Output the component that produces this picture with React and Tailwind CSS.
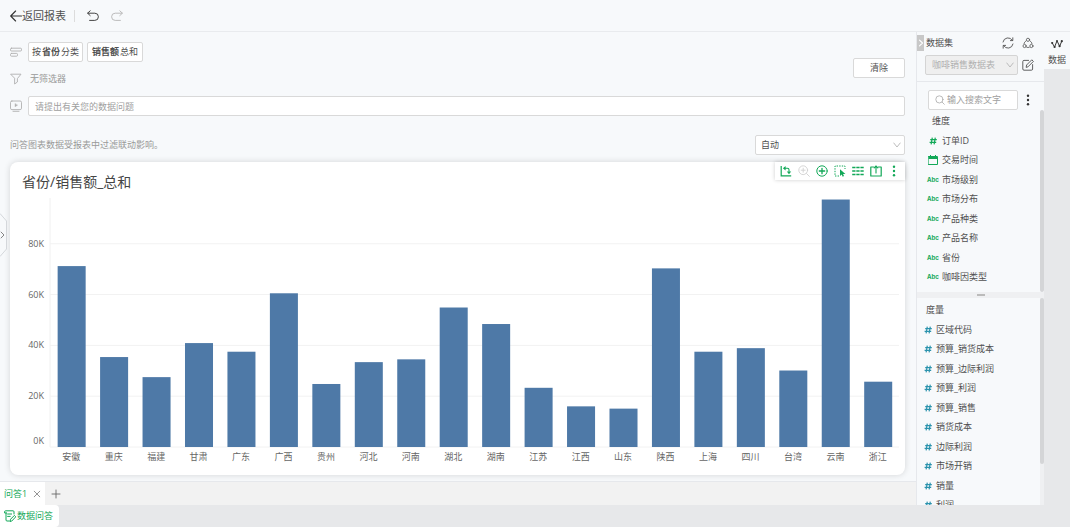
import React, { useState } from "react";

const CHART_MAX = 98000;

const provinces = [
  { name: "安徽", value: 71200 },
  { name: "重庆", value: 35400 },
  { name: "福建", value: 27500 },
  { name: "甘肃", value: 40900 },
  { name: "广东", value: 37500 },
  { name: "广西", value: 60500 },
  { name: "贵州", value: 24800 },
  { name: "河北", value: 33400 },
  { name: "河南", value: 34500 },
  { name: "湖北", value: 54900 },
  { name: "湖南", value: 48400 },
  { name: "江苏", value: 23300 },
  { name: "江西", value: 16000 },
  { name: "山东", value: 15100 },
  { name: "陕西", value: 70300 },
  { name: "上海", value: 37500 },
  { name: "四川", value: 38900 },
  { name: "台湾", value: 30100 },
  { name: "云南", value: 97400 },
  { name: "浙江", value: 25700 },
];

const ticks = [20, 40, 60, 80];

const dimensions = [
  { name: "订单ID", type: "number" },
  { name: "交易时间", type: "date" },
  { name: "市场级别", type: "text" },
  { name: "市场分布", type: "text" },
  { name: "产品种类", type: "text" },
  { name: "产品名称", type: "text" },
  { name: "省份", type: "text" },
  { name: "咖啡因类型", type: "text" },
];

const measures = [
  "区域代码",
  "预算_销货成本",
  "预算_边际利润",
  "预算_利润",
  "预算_销售",
  "销货成本",
  "边际利润",
  "市场开销",
  "销量",
  "利润",
];

const Icon = ({ className = "", box = 12, children }) => (
  <svg
    viewBox={`0 0 ${box} ${box}`}
    className={`shrink-0 ${className}`}
    fill="none"
    stroke="currentColor"
    strokeLinecap="round"
    strokeLinejoin="round"
    aria-hidden="true"
  >
    {children}
  </svg>
);

const HashIcon = ({ className }) => (
  <Icon className={`h-2.5 w-2.5 ${className}`} box={10}>
    <path d="M4.3 1.6 3.1 8.4M7.3 1.6 6.1 8.4M2.2 3.6h6.6M1.6 6.3h6.6" strokeWidth="1.2" strokeLinecap="butt" />
  </Icon>
);

const CalendarIcon = () => (
  <Icon className="h-2.5 w-2.5 text-[#12a858]" box={10}>
    <path d="M.5 1.5h9v8h-9z" strokeWidth="1" strokeLinejoin="miter" />
    <path d="M.5 3h9" strokeWidth="2" strokeLinecap="butt" />
    <path d="M2.5 0v2M7.5 0v2" strokeWidth="1" strokeLinecap="butt" />
  </Icon>
);

const MoreIcon = ({ className }) => (
  <Icon className={className}>
    <g fill="currentColor" stroke="none">
      <circle cx="6" cy="1.7" r="1.2" />
      <circle cx="6" cy="6" r="1.2" />
      <circle cx="6" cy="10.3" r="1.2" />
    </g>
  </Icon>
);

const ChevronDown = () => (
  <Icon
    className="pointer-events-none col-start-1 row-start-1 mr-1 h-2 w-2 justify-self-end text-[#b5b5b5]"
    box={8}
  >
    <path d="M.8 2 4 6l3.2-4" strokeWidth=".9" />
  </Icon>
);

const Header = () => (
  <header className="flex h-8 shrink-0 items-center border-b border-[#e9ebee] px-2.5">
    <button className="flex items-center text-[11px]">
      <Icon className="h-3 w-3 text-[#333]">
        <path d="M11.5 6H.8M5.6 1 .7 6l4.9 5" strokeWidth="1.1" />
      </Icon>
      返回报表
    </button>
    <span className="ml-2 h-3 w-px bg-[#dcdcdc]" />
    <button aria-label="撤销" className="ml-3 text-[#444]">
      <Icon className="h-3 w-3">
        <path d="M3.2.8.6 3.2l2.6 2.4M.8 3.2h7a3.6 3.6 0 0 1 0 7.2H2.6" strokeWidth="1" />
      </Icon>
    </button>
    <button aria-label="重做" className="ml-3 text-[#bbb]">
      <Icon className="h-3 w-3">
        <path d="M8.8.8l2.6 2.4-2.6 2.4M11.2 3.2h-7a3.6 3.6 0 0 0 0 7.2h5.2" strokeWidth="1" />
      </Icon>
    </button>
  </header>
);

const QueryBar = () => (
  <section className="flex flex-col gap-2">
    <div className="flex items-start">
      <div className="flex flex-1 flex-col gap-2">
        <div className="flex items-center gap-1.5">
          <Icon className="h-3 w-3 text-[#b0b0b0]">
            <rect x=".5" y="2.2" width="11" height="2.8" rx="1" strokeWidth=".9" />
            <rect x=".5" y="7.4" width="7" height="2.8" rx="1" strokeWidth=".9" />
          </Icon>
          <div className="flex gap-1">
            <button className="h-5 rounded-xs border border-[#d9d9d9] bg-white px-[3px]">
              按<b className="px-px">省份</b>分类
            </button>
            <button className="h-5 rounded-xs border border-[#d9d9d9] bg-white px-1">
              <b className="pr-px">销售额</b>总和
            </button>
          </div>
        </div>
        <div className="flex h-[18px] items-center gap-2 text-[#999]">
          <Icon className="h-3 w-3 text-[#b0b0b0]">
            <path d="M1 1.2h10L7.4 5.6v3.4l-2.8 2V5.6z" strokeWidth=".9" />
          </Icon>
          无筛选器
        </div>
      </div>
      <button className="mt-4 h-5 rounded-xs border border-[#d9d9d9] bg-white px-4">清除</button>
    </div>
    <div className="flex items-center gap-1.5">
      <Icon className="h-3 w-3 text-[#b0b0b0]">
        <rect x=".5" y="1" width="11" height="8.6" rx="1.4" strokeWidth=".9" />
        <path d="M3 11.3h6" strokeWidth=".9" />
        <path d="M5 3.8v3l2.4-1.5z" fill="currentColor" strokeWidth=".4" />
      </Icon>
      <input
        aria-label="数据问题"
        placeholder="请提出有关您的数据问题"
        className="h-5 min-w-0 flex-1 rounded-xs border border-[#d9d9d9] bg-white px-1.5 placeholder:text-[#a0a0a0]"
      />
    </div>
  </section>
);

const ChartToolbar = () => (
  <div className="absolute top-0 right-0 flex h-[18px] items-center gap-1.5 bg-white px-[5px] text-[#12a858] shadow-[0_0_4px_rgba(0,0,0,0.2)]">
    <button aria-label="行列转换">
      <Icon className="h-3 w-3">
        <path d="M1.2 1v9.8h10" strokeWidth="1.2" strokeLinecap="butt" strokeLinejoin="miter" />
        <path d="M5 3.2h2.4q1.6 0 1.6 1.6v2" strokeWidth="1.1" strokeLinecap="butt" />
        <path d="M5.6 1v4.4L2.9 3.2zM6.8 6.4h4.4L9 9.2z" fill="currentColor" stroke="none" />
      </Icon>
    </button>
    <button aria-label="放大" className="text-[#d0d0d0]">
      <Icon className="h-3 w-3">
        <circle cx="5.2" cy="5.2" r="4.4" strokeWidth=".9" />
        <path d="M8.5 8.5l2.9 2.9M3.2 5.2h4M5.2 3.2v4" strokeWidth=".9" />
      </Icon>
    </button>
    <button aria-label="添加">
      <Icon className="h-3 w-3">
        <circle cx="6" cy="6" r="5.2" strokeWidth="1" />
        <path d="M3.3 6h5.4M6 3.3v5.4" strokeWidth="1.3" />
      </Icon>
    </button>
    <button aria-label="框选">
      <Icon className="h-3 w-3">
        <path
          d="M5 11H1V1h10v3"
          strokeWidth="1"
          strokeDasharray="1.4 1.2"
          strokeLinecap="butt"
        />
        <path d="M6 4.2v6.8l1.7-1.5 1 2.2 1.3-.6-1-2.1h2.4z" fill="currentColor" stroke="none" />
      </Icon>
    </button>
    <button aria-label="明细">
      <Icon className="h-3 w-3">
        <path
          d="M.2 2.5h11.6M.2 6h11.6M.2 9.5h11.6"
          strokeWidth="1.4"
          strokeDasharray="3.3 .8"
          strokeLinecap="butt"
        />
      </Icon>
    </button>
    <button aria-label="导出">
      <Icon className="h-3 w-3">
        <path d="M3.6 2H.8v9h10.4V2H8.4" strokeWidth="1.2" />
        <path d="M6 8V1.2M4.2 2.8 6 1l1.8 1.8" strokeWidth="1.1" />
      </Icon>
    </button>
    <button aria-label="更多">
      <MoreIcon className="h-3 w-3" />
    </button>
  </div>
);

const BarChart = () => {
  const slot = 100 / provinces.length;
  const yOf = (value) => 100 - (value / CHART_MAX) * 100;

  return (
    <div className="flex min-h-0 flex-1 flex-col">
      <div className="flex min-h-0 flex-1">
        <svg className="h-full w-10 overflow-visible" aria-hidden="true">
          {ticks.map((tick) => (
            <text key={tick} x="34" y={`${yOf(tick * 1000)}%`} dy="3" textAnchor="end" fill="#666">
              {tick}K
            </text>
          ))}
          <text x="34" y="100%" dy="-3" textAnchor="end" fill="#666">
            0K
          </text>
        </svg>
        <svg className="h-full min-w-0 flex-1 overflow-visible" role="img" aria-label="省份/销售额_总和">
          <line x1="0" x2="0" y1="0" y2="100%" stroke="#f0f0f0" />
          {[0, ...ticks].map((tick) => (
            <line
              key={tick}
              x1="0"
              x2="100%"
              y1={`${yOf(tick * 1000)}%`}
              y2={`${yOf(tick * 1000)}%`}
              stroke="#f2f2f2"
            />
          ))}
          {provinces.map((item, i) => (
            <rect
              key={item.name}
              x={`${(i + 0.18) * slot}%`}
              y={`${yOf(item.value)}%`}
              width={`${slot * 0.66}%`}
              height={`${100 - yOf(item.value)}%`}
              fill="#4e79a7"
            />
          ))}
        </svg>
      </div>
      <div className="flex h-5 items-center pl-10 text-[#666]">
        {provinces.map((item) => (
          <span key={item.name} className="flex-1 text-center">
            {item.name}
          </span>
        ))}
      </div>
    </div>
  );
};

const FieldIcon = ({ type }) => {
  if (type === "number") return <HashIcon className="text-[#12a858]" />;
  if (type === "date") return <CalendarIcon />;
  return <span className="font-['Inter',sans-serif] text-[6px] font-bold text-[#12a858]">Abc</span>;
};

const DataPanel = () => (
  <aside className="flex w-32 shrink-0 flex-col border-l border-[#e6e8ec]">
    <div className="flex flex-col gap-1 border-b border-[#e6e8ec] pt-[3px] pb-1.5">
      <div className="flex items-center pr-2.5">
        <button aria-label="收起" className="flex h-4 w-[7px] items-center justify-center bg-[#c8c8c8] text-white">
          <Icon className="h-2 w-2" box={8}>
            <path d="M2.5 1.2 5.5 4l-3 2.8" strokeWidth="1.1" />
          </Icon>
        </button>
        <h2 className="ml-0.5 flex-1">数据集</h2>
        <button aria-label="刷新" className="mr-2">
          <Icon className="h-3 w-3">
            <path
              d="M1 5A5.1 5.1 0 0 1 10.4 3.4M11 7A5.1 5.1 0 0 1 1.6 8.6M10.8.8v2.8H8.4M1.2 11.2V8.4h2.4"
              strokeWidth=".9"
            />
          </Icon>
        </button>
        <button aria-label="关系">
          <Icon className="h-3 w-3">
            <circle cx="6" cy="2.8" r="1.6" strokeWidth=".8" />
            <circle cx="2.6" cy="9" r="1.6" strokeWidth=".8" />
            <circle cx="9.4" cy="9" r="1.6" strokeWidth=".8" />
            <path d="M3.8 4Q2.2 5 2 6.6M8.2 4Q9.8 5 10 6.6M4.9 10.4h2.2" strokeWidth=".8" />
          </Icon>
        </button>
      </div>
      <div className="flex items-center gap-1 pr-2.5 pl-2">
        <div className="grid min-w-0 flex-1 items-center">
          <select
            disabled
            aria-label="数据集"
            className="col-start-1 row-start-1 h-5 w-full appearance-none rounded-xs border border-[#d4d4d4] bg-[#efefef] px-1.5 text-[#b0b0b0] opacity-100"
          >
            <option>咖啡销售数据表</option>
          </select>
          <ChevronDown />
        </div>
        <button aria-label="编辑">
          <Icon className="h-3 w-3">
            <path
              d="M6.6 1.4H2A1.2 1.2 0 0 0 .8 2.6V10A1.2 1.2 0 0 0 2 11.2h7.4a1.2 1.2 0 0 0 1.2-1.2V5.6"
              strokeWidth=".9"
            />
            <path d="M4.2 8l.4-2L9.8.8l1.6 1.6L6.2 7.6z" strokeWidth=".9" />
          </Icon>
        </button>
      </div>
    </div>

    <div className="flex items-center gap-1 pt-2 pr-2.5 pl-[11px]">
      <label className="flex h-5 min-w-0 flex-1 items-center gap-0.5 rounded-xs border border-[#d9d9d9] bg-white px-1.5">
        <Icon className="h-2.5 w-2.5 text-[#aaa]" box={10}>
          <circle cx="4.4" cy="4.4" r="3.6" strokeWidth=".8" />
          <path d="M7.1 7.1l2.2 2.2" strokeWidth=".8" />
        </Icon>
        <input
          aria-label="搜索字段"
          placeholder="输入搜索文字"
          className="w-full min-w-0 placeholder:text-[#a0a0a0]"
        />
      </label>
      <button aria-label="更多" className="text-[#333]">
        <MoreIcon className="h-3 w-3" />
      </button>
    </div>

    <div className="flex shrink-0">
      <div className="flex-1 pt-px pb-[5px] pl-[11px]">
        <h3 className="pl-1 leading-5">维度</h3>
        <ul className="flex h-[156px] flex-col justify-around">
          {dimensions.map((field) => (
            <li key={field.name} className="flex items-center gap-1">
              <span className="flex w-2.5 justify-center">
                <FieldIcon type={field.type} />
              </span>
              {field.name}
            </li>
          ))}
        </ul>
      </div>
      <div className="w-1 rounded-full bg-[#d4d5d7]" />
    </div>
    <div className="flex h-1.5 shrink-0 items-center justify-center bg-[#eff0f2]">
      <span className="h-0.5 w-2 bg-[#bbb]" />
    </div>
    <div className="flex min-h-0 flex-1">
      <div className="flex-1 overflow-hidden pt-0.5 pl-1.5">
        <h3 className="pl-[3px] leading-5">度量</h3>
        <ul className="flex h-[195px] flex-col justify-around">
          {measures.map((name) => (
            <li key={name} className="flex items-center gap-[3px]">
              <HashIcon className="text-[#2b93ad]" />
              {name}
            </li>
          ))}
        </ul>
      </div>
      <div className="w-1 bg-[#eff0f2]">
        <div className="h-4/5 rounded-full bg-[#d4d5d7]" />
      </div>
    </div>
  </aside>
);

export default function App() {
  const [mode, setMode] = useState("auto");

  return (
    <div className="flex h-screen flex-col bg-[#f7f9fb] font-['Open_Sans','Noto_Sans_CJK_SC',sans-serif] text-[9px] leading-4 text-[#505050]">
      <Header />
      <div className="flex min-h-0 flex-1">
        <div className="flex min-w-0 flex-1 flex-col">
          <main className="relative flex min-h-0 flex-1 flex-col pt-2.5 pr-[11px] pb-1.5 pl-2.5">
            <QueryBar />
            <div className="flex items-center justify-between pt-[19px] pb-[7px]">
              <p className="text-[#999]">问答图表数据受报表中过滤联动影响。</p>
              <div className="grid w-[150px] items-center">
                <select
                  aria-label="图表类型"
                  value={mode}
                  onChange={(e) => setMode(e.target.value)}
                  className="col-start-1 row-start-1 h-5 w-full appearance-none rounded-xs border border-[#d9d9d9] bg-white px-[5px]"
                >
                  <option value="auto">自动</option>
                </select>
                <ChevronDown />
              </div>
            </div>
            <section className="relative flex min-h-0 flex-1 flex-col rounded-lg bg-white pr-1.5 pb-2 shadow-[0_0_6px_rgba(0,0,0,0.15)]">
              <h1 className="px-3 pt-2.5 pb-1.5 text-sm leading-5 text-[#444]">省份/销售额_总和</h1>
              <ChartToolbar />
              <BarChart />
            </section>
            <button aria-label="展开" className="absolute top-[181px] left-0 text-[#777]">
              <svg viewBox="0 0 7 44" className="h-11 w-[7px]" fill="none">
                <path d="M0 .5 6.5 8v28L0 43.5" fill="#f7f9fb" stroke="#d4d7db" />
                <path d="M.8 18.8 4 22 .8 25.2" stroke="currentColor" strokeWidth=".9" />
              </svg>
            </button>
          </main>
          <nav className="flex h-6 shrink-0 items-center border-t border-[#e6e8ec] bg-[#f2f2f2]">
            <div className="flex h-full items-center gap-1.5 bg-white px-1">
              <a href="#qa1" className="text-[#12a858]">
                问答1
              </a>
              <button aria-label="关闭" className="text-[#888]">
                <Icon className="h-2 w-2" box={8}>
                  <path d="M1.2 1.2l5.6 5.6M6.8 1.2 1.2 6.8" strokeWidth=".9" />
                </Icon>
              </button>
            </div>
            <button aria-label="新建" className="ml-1.5 text-[#666]">
              <Icon className="h-2.5 w-2.5" box={10}>
                <path d="M5 1v8M1 5h8" strokeWidth=".9" />
              </Icon>
            </button>
          </nav>
        </div>
        <DataPanel />
        <div className="w-[26px] shrink-0 bg-[#e7e8ea]">
          <button className="flex w-full flex-col items-center gap-0.5 bg-[#f7f9fb] pt-1.5 pb-px">
            <Icon className="h-3 w-3 text-[#333]">
              <path d="M1.2 5 3.6 9 6 2.8 8.6 8.2 10.8 3.2" strokeWidth="1" />
              <g fill="currentColor" stroke="none">
                <circle cx="1.2" cy="5" r="1.1" />
                <circle cx="3.6" cy="9" r="1.1" />
                <circle cx="6" cy="2.8" r=".9" />
                <circle cx="8.6" cy="8.2" r="1.1" />
                <circle cx="10.8" cy="3.2" r="1.1" />
              </g>
            </Icon>
            数据
          </button>
        </div>
      </div>
      <footer className="flex h-[22px] shrink-0 bg-[#e7e8ea]">
        <a
          href="#qa"
          className="flex items-center gap-px rounded-r-sm bg-white pr-1.5 pl-1 text-[#12a858]"
        >
          <Icon className="h-3 w-3">
            <path
              d="M10 4V1.8Q10 .8 9 .8H1.6q-1 0-1 1V3h2M2 3v7q0 1 1 1h2.4M3.6 4h4M3.6 6.4h2.6"
              strokeWidth="1"
            />
            <path d="M6.2 11.2l.4-2L10.4 5.4l1.4 1.4L8 10.8z" strokeWidth="1" />
          </Icon>
          数据问答
        </a>
      </footer>
    </div>
  );
}
